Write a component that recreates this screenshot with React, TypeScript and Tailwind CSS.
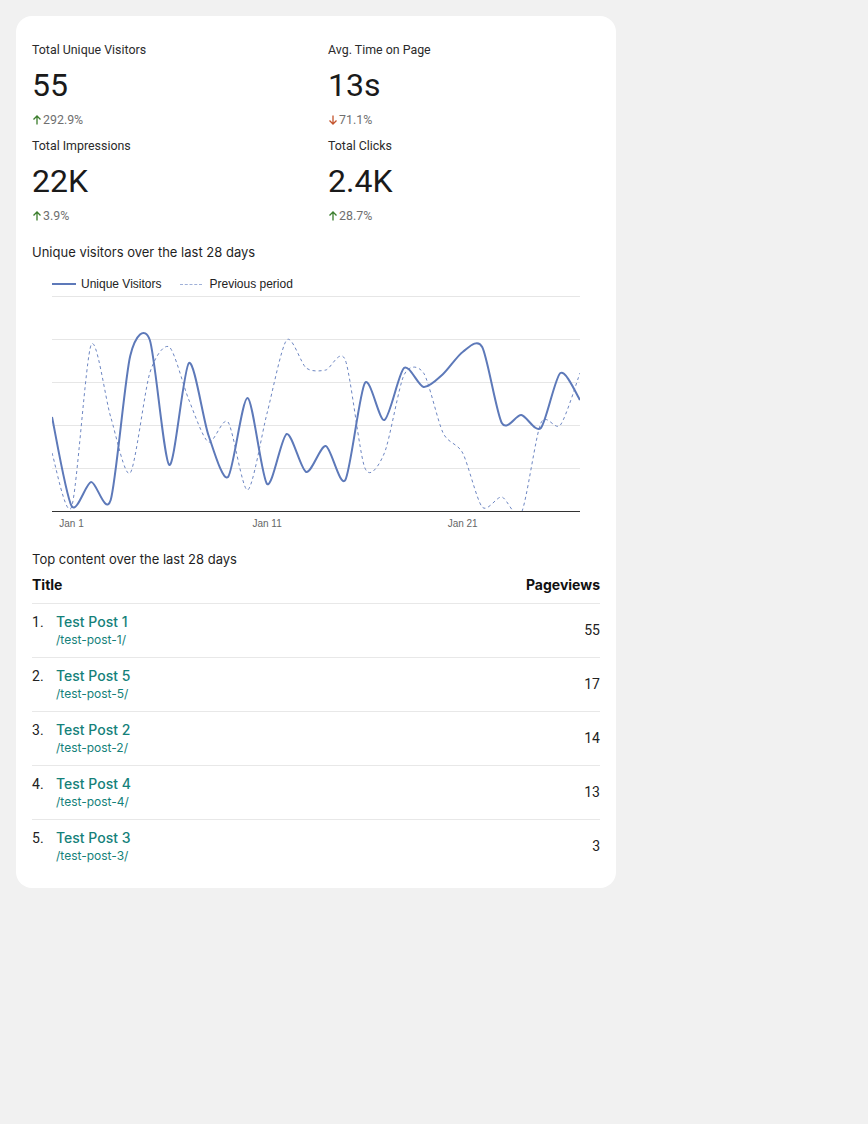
import React from 'react'

const stats = [
  { label: 'Total Unique Visitors', value: '55', change: '292.9%', up: true },
  { label: 'Avg. Time on Page', value: '13s', change: '71.1%', up: false },
  { label: 'Total Impressions', value: '22K', change: '3.9%', up: true },
  { label: 'Total Clicks', value: '2.4K', change: '28.7%', up: true },
]

const posts = [
  { title: 'Test Post 1', path: '/test-post-1/', views: 55 },
  { title: 'Test Post 5', path: '/test-post-5/', views: 17 },
  { title: 'Test Post 2', path: '/test-post-2/', views: 14 },
  { title: 'Test Post 4', path: '/test-post-4/', views: 13 },
  { title: 'Test Post 3', path: '/test-post-3/', views: 3 },
]

// pixel y values of the page; converted to chart coords below
const current = [417, 506, 482, 500, 356, 340, 465, 363, 435, 477, 398, 484, 434, 472, 446, 480, 383, 420, 368, 387, 374, 352, 347, 423, 415, 428, 373, 400]
const previous = [453, 507, 345, 417, 473, 373, 347, 400, 442, 422, 490, 413, 340, 368, 370, 360, 468, 453, 375, 373, 433, 453, 507, 497, 513, 423, 425, 373]

const X0 = 20
const STEP = 528 / 27
const OFFSET = 292

// catmull-rom -> cubic bezier
function smoothPath(ys: number[]) {
  const pts = ys.map((y, i) => [X0 + i * STEP, y - OFFSET])
  let d = `M${pts[0][0]},${pts[0][1]}`
  for (let i = 0; i < pts.length - 1; i++) {
    const p0 = pts[i - 1] || pts[i]
    const p1 = pts[i]
    const p2 = pts[i + 1]
    const p3 = pts[i + 2] || p2
    const t = 7.5
    const c1x = p1[0] + (p2[0] - p0[0]) / t
    const c1y = p1[1] + (p2[1] - p0[1]) / t
    const c2x = p2[0] - (p3[0] - p1[0]) / t
    const c2y = p2[1] - (p3[1] - p1[1]) / t
    d += ` C${c1x.toFixed(1)},${c1y.toFixed(1)} ${c2x.toFixed(1)},${c2y.toFixed(1)} ${p2[0].toFixed(1)},${p2[1].toFixed(1)}`
  }
  return d
}

function Arrow({ up }: { up: boolean }) {
  return (
    <svg width="10" height="10" viewBox="0 0 10 10" className={up ? 'text-[#3b7d2c]' : 'text-[#c4532c]'}>
      {up ? (
        <path d="M5 9.5V1M1.5 4.5L5 1l3.5 3.5" fill="none" stroke="currentColor" strokeWidth="1.3" />
      ) : (
        <path d="M5 0.5V9M1.5 5.5L5 9l3.5-3.5" fill="none" stroke="currentColor" strokeWidth="1.3" />
      )}
    </svg>
  )
}

function Chart() {
  const grid = [4, 47, 90, 133, 176]
  return (
    <svg width="568" height="240" className="block">
      <defs>
        <clipPath id="plot">
          <rect x="20" y="0" width="528" height="219" />
        </clipPath>
      </defs>
      {grid.map((y) => (
        <line key={y} x1="20" x2="548" y1={y + 0.5} y2={y + 0.5} stroke="#e6e6e6" strokeWidth="1" />
      ))}
      <g clipPath="url(#plot)">
        <path d={smoothPath(previous)} fill="none" stroke="#6d86c2" strokeWidth="1" strokeDasharray="3 3" />
        <path d={smoothPath(current)} fill="none" stroke="#5d79b9" strokeWidth="2" />
      </g>
      <line x1="20" x2="548" y1="219.5" y2="219.5" stroke="#333" strokeWidth="1" />
      {[
        { label: 'Jan 1', i: 1 },
        { label: 'Jan 11', i: 11 },
        { label: 'Jan 21', i: 21 },
      ].map((t) => (
        <text
          key={t.label}
          x={X0 + t.i * STEP}
          y="234.5"
          textAnchor="middle"
          fontSize="10"
          fill="#666"
          fontFamily="'Liberation Sans', Arial, sans-serif"
        >
          {t.label}
        </text>
      ))}
    </svg>
  )
}

export default function App() {
  return (
    <div className="min-h-[1124px] bg-[#f1f1f1] p-4">
      <div className="w-[600px] rounded-2xl bg-white px-4 pt-[26px] pb-[15px]">
        {/* Stats */}
        <div className="grid grid-cols-[296px_1fr] font-['Roboto',sans-serif]">
          {stats.map((s) => (
            <div key={s.label} className="pb-[10px]">
              <div className="text-[12.4px] leading-4 text-[#2b2b2b]">{s.label}</div>
              <div className="mt-[7px] text-[32px] leading-10 text-[#1a1a1a]">{s.value}</div>
              <div className="mt-[7px] flex items-center gap-[1px] text-[12.4px] leading-4 text-[#6f6f6f]">
                <Arrow up={s.up} />
                <span>{s.change}</span>
              </div>
            </div>
          ))}
        </div>

        {/* Chart */}
        <div className="mt-2 text-[13px] leading-5 text-[#1f1f1f] font-['Inter',sans-serif]">
          Unique visitors over the last 28 days
        </div>
        <div className="mt-[14px] flex h-4 items-center pl-5 text-[12px] text-[#222] font-['Liberation_Sans',Arial,sans-serif]">
          <span className="h-[2px] w-6 bg-[#5d79b9]" />
          <span className="ml-[5px]">Unique Visitors</span>
          <span className="ml-[19px] w-[22px] border-t border-dashed border-[#9fb0d8]" />
          <span className="ml-[7px]">Previous period</span>
        </div>
        <Chart />

        {/* Top content */}
        <div className="mt-[17px] text-[13px] leading-5 text-[#1f1f1f] font-['Inter',sans-serif]">
          Top content over the last 28 days
        </div>
        <div className="mt-[6px] flex justify-between border-b border-[#e8e8e8] pb-2 text-[14px] leading-5 font-bold text-[#111] font-['Inter',sans-serif]">
          <span>Title</span>
          <span>Pageviews</span>
        </div>
        {posts.map((p, i) => (
          <div
            key={p.path}
            className={`flex items-center justify-between pt-2 pb-[9px] ${i < posts.length - 1 ? 'border-b border-[#e8e8e8]' : ''}`}
          >
            <div className="flex">
              <span className="w-6 text-[14px] leading-5 text-[#222] font-['Roboto',sans-serif]">{i + 1}.</span>
              <div className="font-['Inter',sans-serif]">
                <div className="text-[14px] leading-5 font-medium text-[#15817a]">{p.title}</div>
                <div className="text-[12px] leading-4 text-[#15817a]">{p.path}</div>
              </div>
            </div>
            <span className="text-[14px] text-[#222] font-['Roboto',sans-serif]">{p.views}</span>
          </div>
        ))}
      </div>
    </div>
  )
}
